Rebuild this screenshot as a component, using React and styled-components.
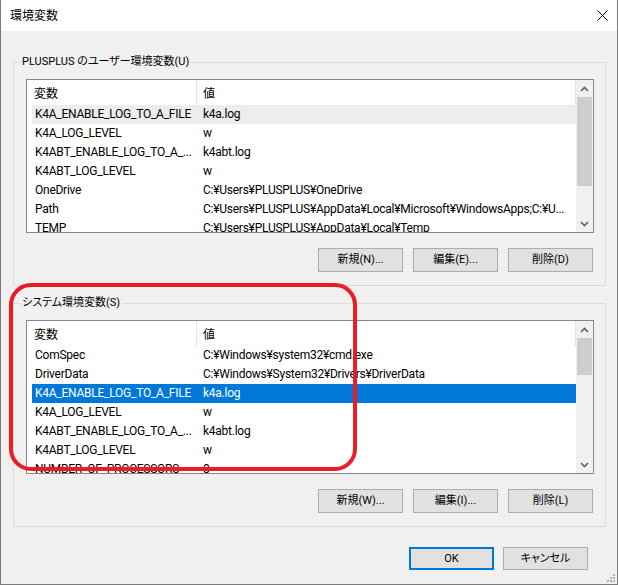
import React from 'react'
import styled, { createGlobalStyle } from 'styled-components'

const GlobalStyle = createGlobalStyle`
  html, body {
    margin: 0;
    padding: 0;
    background: #ffffff;
  }
  body {
    font-family: Roboto, "Noto Sans CJK JP", sans-serif;
    font-size: 12px;
    color: #000000;
  }
`

const Window = styled.div`
  position: relative;
  width: 618px;
  height: 585px;
  box-sizing: border-box;
  display: flex;
  flex-direction: column;
  background: #f0f0f0;
  border: 1px solid #7a7a7a;
  border-top: none;
  overflow: hidden;
`

const TitleBar = styled.div`
  flex: none;
  height: 31px;
  display: flex;
  align-items: center;
  justify-content: space-between;
  padding: 0 9px;
  background: #ffffff;
`

const Title = styled.span`
  font-size: 12px;
  line-height: 16px;
`

const Body = styled.div`
  flex: 1;
  display: flex;
  flex-direction: column;
  padding: 23px 11px 0 12px;
`

const Group = styled.fieldset`
  margin: 0 0 ${p => p.$gap || 0}px 0;
  padding: 9px 11px 13px 12px;
  min-width: 0;
  border: 1px solid #dcdcdc;
`

const Legend = styled.legend`
  margin-left: -6px;
  padding: 0 2px;
  line-height: 16px;
  font-family: Roboto, "Noto Sans CJK JP", sans-serif;
  font-size: 11px;
  font-feature-settings: "palt" 1;
`

const List = styled.div`
  height: 154px;
  box-sizing: border-box;
  display: flex;
  border: 1px solid #828790;
  background: #ffffff;
  overflow: hidden;
`

const ListBody = styled.div`
  flex: 1;
  min-width: 0;
  display: flex;
  flex-direction: column;
  overflow: hidden;
`

const Header = styled.div`
  flex: none;
  height: 25px;
  display: grid;
  grid-template-columns: 170px 1fr;
`

const HeaderCell = styled.div`
  display: flex;
  align-items: center;
  padding-left: ${p => p.$pad}px;
  border-right: 1px solid #e5e5e5;
`

const Rows = styled.div`
  padding-left: 5px;
`

const Row = styled.div`
  height: 19px;
  display: grid;
  grid-template-columns: 164px 1fr;
  line-height: 19px;
  background: ${p => (p.$state === 'selected' ? '#0078d7' : p.$state === 'hover' ? '#ededed' : 'transparent')};
  color: ${p => (p.$state === 'selected' ? '#ffffff' : '#000000')};
`

const Cell = styled.div`
  padding-left: ${p => p.$pad}px;
  white-space: nowrap;
  overflow: hidden;
  letter-spacing: -0.25px;
`

const ScrollBar = styled.div`
  flex: none;
  width: 17px;
  display: flex;
  flex-direction: column;
  background: #f0f0f0;
`

const Arrow = styled.div`
  flex: none;
  height: 17px;
  display: flex;
  align-items: center;
  justify-content: center;
`

const Track = styled.div`
  flex: 1;
`

const Thumb = styled.div`
  height: ${p => p.$size}px;
  margin: 0 1px;
  background: #cdcdcd;
`

const ButtonRow = styled.div`
  display: flex;
  justify-content: flex-end;
  gap: ${p => p.$gap}px;
  margin-top: ${p => p.$top}px;
  padding-right: ${p => p.$right}px;
`

const Button = styled.button`
  width: 85px;
  height: ${p => p.$h || 24}px;
  box-sizing: border-box;
  padding: 0;
  font-family: Roboto, "Noto Sans CJK JP", sans-serif;
  font-size: 11px;
  font-feature-settings: "palt" 1;
  line-height: 16px;
  color: #000000;
  background: #e1e1e1;
  border: ${p => (p.$primary ? '2px solid #0078d7' : '1px solid #adadad')};
  border-radius: 0;
`

const GripRow = styled.div`
  flex: none;
  display: flex;
  justify-content: flex-end;
  padding: 0 2px 2px 0;
`

const Annotation = styled.div`
  position: absolute;
  left: 8px;
  top: 283px;
  width: 348px;
  height: 188px;
  box-sizing: border-box;
  border: 4px solid #ec1c24;
  border-radius: 22px;
  pointer-events: none;
`

const Chevron = ({ down }) => (
  <svg width="9" height="6" viewBox="0 0 9 6">
    <polyline
      points={down ? '1,1 4.5,4.5 8,1' : '1,5 4.5,1.5 8,5'}
      fill="none"
      stroke="#606060"
      strokeWidth="1.6"
    />
  </svg>
)

const CloseIcon = () => (
  <svg width="11" height="11" viewBox="0 0 11 11">
    <path d="M0.5 0.5 L10.5 10.5 M10.5 0.5 L0.5 10.5" stroke="#000" strokeWidth="1" />
  </svg>
)

const Grip = () => (
  <svg width="8" height="8" viewBox="0 0 8 8">
    {[[6, 0], [3, 3], [6, 3], [0, 6], [3, 6], [6, 6]].map(([x, y]) => (
      <rect key={`${x}-${y}`} x={x} y={y} width="2" height="2" fill="#b4b4b4" />
    ))}
  </svg>
)

const userVars = [
  ['K4A_ENABLE_LOG_TO_A_FILE', 'k4a.log', 'hover'],
  ['K4A_LOG_LEVEL', 'w'],
  ['K4ABT_ENABLE_LOG_TO_A_...', 'k4abt.log'],
  ['K4ABT_LOG_LEVEL', 'w'],
  ['OneDrive', 'C:¥Users¥PLUSPLUS¥OneDrive'],
  ['Path', 'C:¥Users¥PLUSPLUS¥AppData¥Local¥Microsoft¥WindowsApps;C:¥U...'],
  ['TEMP', 'C:¥Users¥PLUSPLUS¥AppData¥Local¥Temp'],
]

const systemVars = [
  ['ComSpec', 'C:¥Windows¥system32¥cmd.exe'],
  ['DriverData', 'C:¥Windows¥System32¥Drivers¥DriverData'],
  ['K4A_ENABLE_LOG_TO_A_FILE', 'k4a.log', 'selected'],
  ['K4A_LOG_LEVEL', 'w'],
  ['K4ABT_ENABLE_LOG_TO_A_...', 'k4abt.log'],
  ['K4ABT_LOG_LEVEL', 'w'],
  ['NUMBER_OF_PROCESSORS', '8'],
]

const VarList = ({ rows, thumb }) => (
  <List>
    <ListBody>
      <Header>
        <HeaderCell $pad={7}>変数</HeaderCell>
        <HeaderCell $pad={6}>値</HeaderCell>
      </Header>
      <Rows>
        {rows.map(([name, value, state]) => (
          <Row key={name} $state={state}>
            <Cell $pad={3}>{name}</Cell>
            <Cell $pad={7}>{value}</Cell>
          </Row>
        ))}
      </Rows>
    </ListBody>
    <ScrollBar>
      <Arrow><Chevron /></Arrow>
      <Track><Thumb $size={thumb} /></Track>
      <Arrow><Chevron down /></Arrow>
    </ScrollBar>
  </List>
)

const VarGroup = ({ title, rows, thumb, keys, gap }) => (
  <Group $gap={gap}>
    <Legend>{title}</Legend>
    <VarList rows={rows} thumb={thumb} />
    <ButtonRow $gap={10} $top={15} $right={1}>
      <Button>新規({keys[0]})...</Button>
      <Button>編集({keys[1]})...</Button>
      <Button>削除({keys[2]})</Button>
    </ButtonRow>
  </Group>
)

export default function App() {
  return (
    <>
      <GlobalStyle />
      <Window>
        <TitleBar>
          <Title>環境変数</Title>
          <CloseIcon />
        </TitleBar>
        <Body>
          <VarGroup
            title="PLUSPLUS のユーザー環境変数(U)"
            rows={userVars}
            thumb={89}
            keys={['N', 'E', 'D']}
            gap={9}
          />
          <VarGroup
            title="システム環境変数(S)"
            rows={systemVars}
            thumb={37}
            keys={['W', 'I', 'L']}
          />
          <ButtonRow $gap={9} $top={20} $right={18}>
            <Button $primary $h={23}>OK</Button>
            <Button $h={23}>キャンセル</Button>
          </ButtonRow>
        </Body>
        <GripRow>
          <Grip />
        </GripRow>
        <Annotation />
      </Window>
    </>
  )
}
